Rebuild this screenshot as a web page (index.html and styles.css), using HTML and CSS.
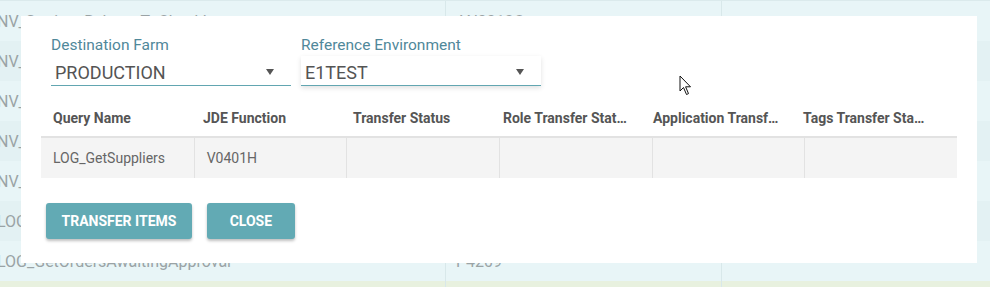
FILE: index.html
```html
<!DOCTYPE html>
<html lang="en">
  <head>
    <meta charset="UTF-8" />
    <meta name="viewport" content="width=device-width, initial-scale=1.0" />
    <title>Transfer Items</title>
    <link rel="stylesheet" href="styles.css">
  </head>
  <body>
    <div class="page">
      <!-- list behind the dialog -->
      <div class="list">
        <div class="row"><span class="c1">NV_SettingsReleaseToCheckIt</span><span class="c2">AN0012C</span><span class="c3"></span></div>
        <div class="row alt"><span class="c1">NV_SettingsCheckValue</span><span class="c2">AN0012D</span><span class="c3"></span></div>
        <div class="row"><span class="c1">NV_SettingsReleaseItem</span><span class="c2">AN0012E</span><span class="c3"></span></div>
        <div class="row alt"><span class="c1">NV_SettingsGetValues</span><span class="c2">AN0013A</span><span class="c3"></span></div>
        <div class="row"><span class="c1">NV_SettingsGetItems</span><span class="c2">AN0013B</span><span class="c3"></span></div>
        <div class="row alt"><span class="c1">LOG_GetSuppliers</span><span class="c2">V0401H</span><span class="c3"></span></div>
        <div class="row"><span class="c1">LOG_GetOrdersAwaitingApproval</span><span class="c2">P4209</span><span class="c3"></span></div>
        <div class="row green"><span class="c1"></span><span class="c2"></span><span class="c3"></span></div>
      </div>

      <div class="dialog">
        <div class="fields">
          <div class="field">
            <label>Destination Farm</label>
            <div class="select">
              <span>PRODUCTION</span>
              <span class="caret"></span>
            </div>
          </div>
          <div class="field focused">
            <label>Reference Environment</label>
            <div class="select">
              <span>E1TEST</span>
              <span class="caret"></span>
            </div>
          </div>
        </div>

        <div class="grid">
          <div class="grid-head">
            <div>Query Name</div>
            <div>JDE Function</div>
            <div>Transfer Status</div>
            <div>Role Transfer Status</div>
            <div>Application Transfer Status</div>
            <div>Tags Transfer Status</div>
          </div>
          <div class="grid-row">
            <div>LOG_GetSuppliers</div>
            <div>V0401H</div>
            <div></div>
            <div></div>
            <div></div>
            <div></div>
          </div>
        </div>

        <div class="actions">
          <button>Transfer Items</button>
          <button>Close</button>
        </div>
      </div>

      <svg class="cursor" width="14" height="22" viewBox="0 0 14 22">
        <path d="M1 1 L1 16 L4.5 12.5 L7.5 19.5 L9.5 18.6 L6.6 11.8 L11.5 11.8 Z" fill="#fff" stroke="#111" stroke-width="1" stroke-linejoin="round"/>
      </svg>
    </div>
  </body>
</html>
```

FILE: styles.css
```css
body {
  margin: 0;
  font-family: Roboto, "Liberation Sans", sans-serif;
  background-color: #e8f5f7;
  overflow: hidden;
}
.page {
  position: relative;
  width: 990px;
  height: 287px;
  overflow: hidden;
}
.list {
  border-top: 1px solid #dbeaec;
}
.row {
  display: grid;
  grid-template-columns: 445px 276px 1fr;
  height: 40px;
  background-color: #e8f5f7;
  color: #9aa3a5;
  font-size: 16px;
}
.row.alt {
  background-color: #e3f1f3;
}
.row.green {
  background-color: #e8f1df;
}
.row span {
  display: flex;
  align-items: center;
  white-space: nowrap;
  overflow: hidden;
}
.row .c1 {
  margin-left: -3px;
}
.row .c2 {
  border-left: 1px solid #d8e8ea;
  padding-left: 10px;
}
.row .c3 {
  border-left: 1px solid #d8e8ea;
}
.dialog {
  position: absolute;
  left: 21px;
  top: 16px;
  width: 916px;
  height: 247px;
  padding: 0 20px;
  background-color: #fff;
}
.fields {
  display: flex;
  gap: 10px;
  padding: 20px 0 0 10px;
}
.field {
  width: 240px;
}
.field label {
  display: block;
  color: #50889a;
  font-size: 15.5px;
  line-height: 18px;
  margin-bottom: 2px;
}
.select {
  display: flex;
  align-items: center;
  justify-content: space-between;
  box-sizing: border-box;
  height: 30px;
  padding: 3px 17px 0 4px;
  border-bottom: 1px solid #62a6b1;
  color: #545454;
  font-size: 18px;
}
.field.focused .select {
  box-shadow: 0 2px 5px rgba(0, 0, 0, 0.12);
}
.caret {
  width: 0;
  height: 0;
  border-left: 4px solid transparent;
  border-right: 4px solid transparent;
  border-top: 6px solid #555;
}
.grid {
  margin-top: 14px;
  font-size: 14px;
}
.grid-head {
  display: grid;
  grid-template-columns: repeat(6, 150px);
  height: 36px;
  border-bottom: 2px solid #e2e2e2;
  color: #555;
  font-weight: bold;
}
.grid-head div,
.grid-row div {
  display: flex;
  align-items: center;
  padding: 0 12px;
  white-space: nowrap;
  overflow: hidden;
  text-overflow: ellipsis;
}
.grid-head div {
  display: block;
  line-height: 36px;
}
.grid-row {
  display: grid;
  grid-template-columns: repeat(6, 1fr);
  height: 40px;
  background-color: #f4f4f4;
  color: #666;
}
.grid-row div + div {
  border-left: 1px solid #e2e2e2;
}
.actions {
  display: flex;
  gap: 15px;
  margin: 25px 0 0 5px;
}
button {
  height: 36px;
  min-width: 88px;
  padding: 0 15.5px;
  border: none;
  border-radius: 3px;
  background-color: #62aab4;
  color: #fff;
  font-family: Roboto, "Liberation Sans", sans-serif;
  font-size: 14px;
  font-weight: bold;
  text-transform: uppercase;
  box-shadow: 0 2px 3px rgba(0, 0, 0, 0.25);
  cursor: pointer;
}
.cursor {
  position: absolute;
  left: 679px;
  top: 75px;
}
```
